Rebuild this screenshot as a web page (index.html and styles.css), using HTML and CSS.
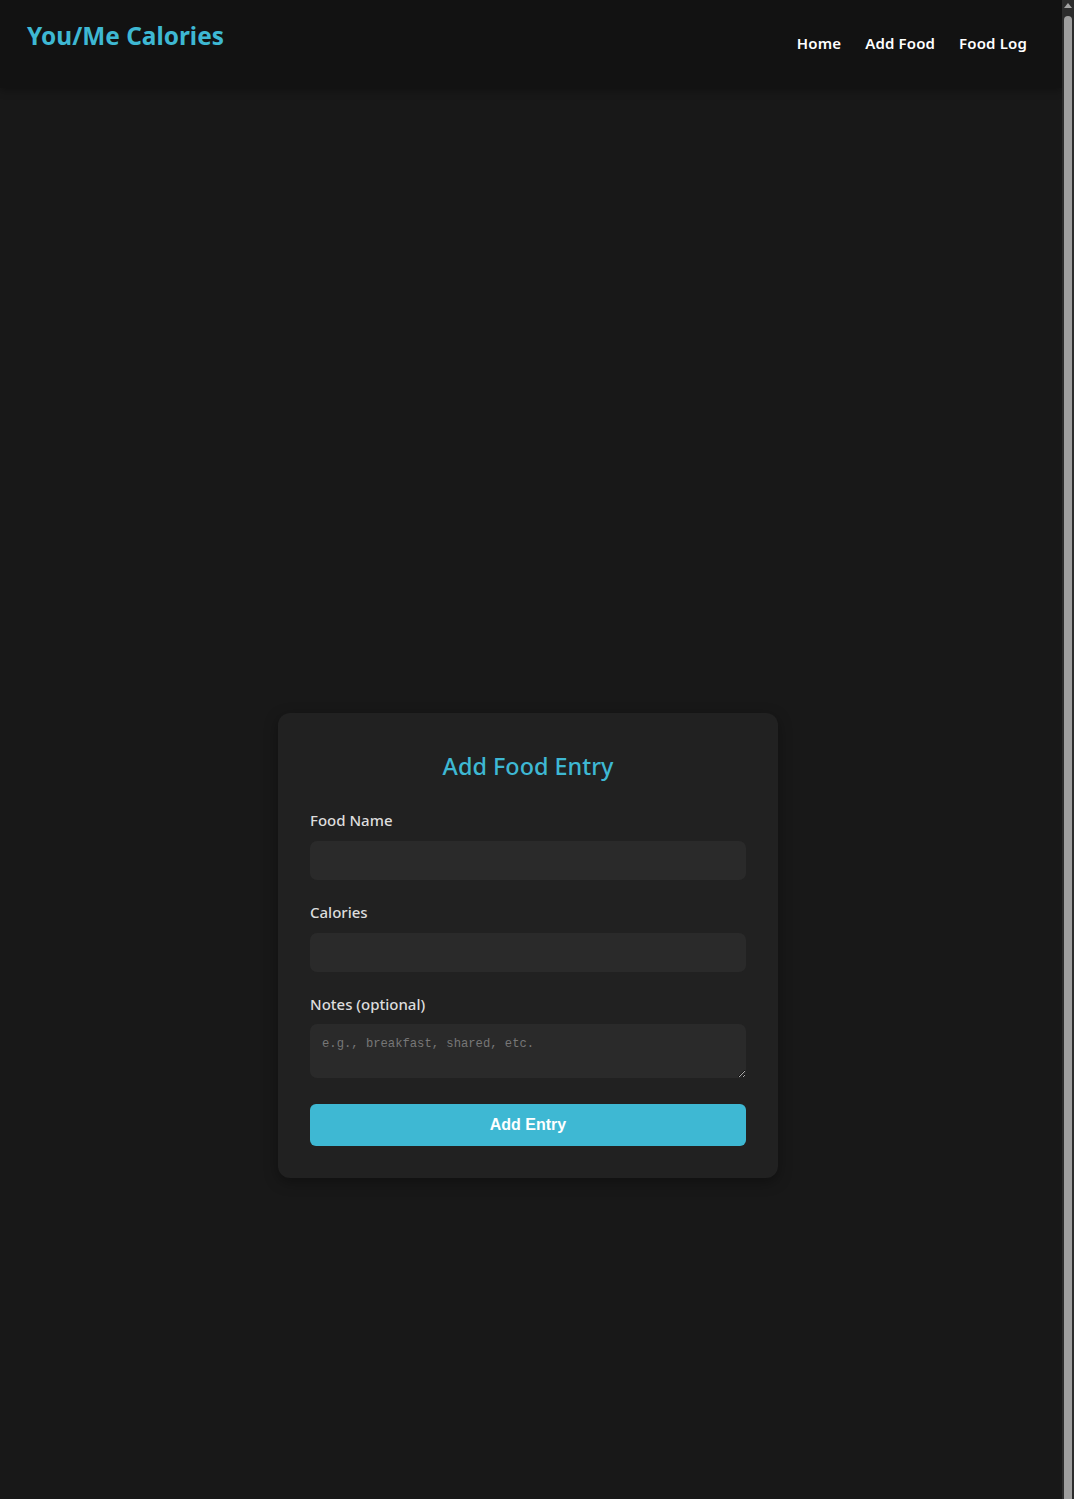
FILE: index.html
```html
<!DOCTYPE html>
<html lang="en">
<head>
<meta charset="utf-8">
<title>You/Me Calories</title>
<link rel="stylesheet" href="styles.css">
</head>
<body>
<header class="site-header">
  <div class="logo">You/Me Calories</div>
  <nav class="nav">
    <a href="#" class="nav-link">Home</a>
    <a href="#" class="nav-link">Add Food</a>
    <a href="#" class="nav-link">Food Log</a>
  </nav>
</header>
<main class="main">
  <form class="card">
    <h2 class="card-title">Add Food Entry</h2>
    <div class="field">
      <label class="label" for="name">Food Name</label>
      <input class="input" id="name" type="text">
    </div>
    <div class="field">
      <label class="label" for="cal">Calories</label>
      <input class="input" id="cal" type="number">
    </div>
    <div class="field field-notes">
      <label class="label" for="notes">Notes (optional)</label>
      <textarea class="textarea" id="notes" placeholder="e.g., breakfast, shared, etc."></textarea>
    </div>
    <button type="button" class="btn">Add Entry</button>
  </form>
</main>
<div class="scrollbar" aria-hidden="true">
  <div class="scroll-arrow"></div>
  <div class="scroll-thumb"></div>
</div>
</body>
</html>
```

FILE: styles.css
```css
* { box-sizing: border-box; }
html, body { margin: 0; padding: 0; }
body {
  background: #181818;
  color: #e0e0e0;
  font-family: "Noto Sans", "Open Sans", sans-serif;
  padding-right: 12px;
}
.site-header {
  height: 88px;
  background: #121212;
  box-shadow: 0 2px 8px rgba(0,0,0,0.35);
  display: flex;
  justify-content: space-between;
  align-items: flex-start;
  padding: 0 35px 0 27px;
}
.logo {
  font-size: 24.4px;
  font-weight: 700;
  color: #3eb8d3;
  margin-top: 19px;
  line-height: 34px;
}
.nav {
  display: flex;
  gap: 24px;
  margin-top: 32px;
}
.nav-link {
  color: #ffffff;
  text-decoration: none;
  font-weight: 600;
  font-size: 15px;
  line-height: 22px;
  letter-spacing: 0.15px;
}
.main {
  display: flex;
  justify-content: center;
  padding: 625px 6px 340px 0;
}
.card {
  width: 500px;
  background: #212121;
  border-radius: 12px;
  box-shadow: 0 4px 14px rgba(0,0,0,0.35);
  padding: 32px;
  display: flex;
  flex-direction: column;
}
.card-title {
  margin: 5px 0 28px;
  text-align: center;
  color: #3eb8d3;
  font-size: 23.4px;
  font-weight: 500;
  line-height: 32px;
}
.field {
  display: flex;
  flex-direction: column;
  margin-bottom: 22px;
}
.field-notes { margin-bottom: 26px; }
.field-notes .label { margin-bottom: 10px; }
.label {
  font-size: 15px;
  font-weight: 500;
  line-height: 20px;
  color: #dddddd;
  margin-bottom: 11px;
}
.input, .textarea {
  width: 100%;
  background: #2a2a2a;
  border: none;
  border-radius: 7px;
  color: #eeeeee;
  outline: none;
}
.input { height: 39px; padding: 0 12px; }
.textarea {
  height: 54px;
  padding: 13px 12px;
  font-family: "Liberation Mono", "DejaVu Sans Mono", monospace;
  font-size: 12.2px;
  resize: vertical;
}
.textarea::placeholder { color: #777777; }
.btn {
  height: 42px;
  background: #3eb8d3;
  color: #ffffff;
  border: none;
  border-radius: 6px;
  font-family: "Liberation Sans", Arial, sans-serif;
  font-weight: 700;
  font-size: 16px;
  padding: 0;
}
.scrollbar {
  position: fixed;
  top: 0;
  right: 0;
  width: 12px;
  height: 100%;
  background: #2c2c2c;
  display: flex;
  flex-direction: column;
  align-items: center;
}
.scroll-arrow {
  margin-top: 3px;
  width: 0;
  height: 0;
  border-left: 4px solid transparent;
  border-right: 4px solid transparent;
  border-bottom: 5px solid #a3a3a3;
}
.scroll-thumb {
  margin-top: 8px;
  width: 8px;
  flex: 1;
  background: #9e9e9e;
  border-radius: 4px 4px 0 0;
}
```
